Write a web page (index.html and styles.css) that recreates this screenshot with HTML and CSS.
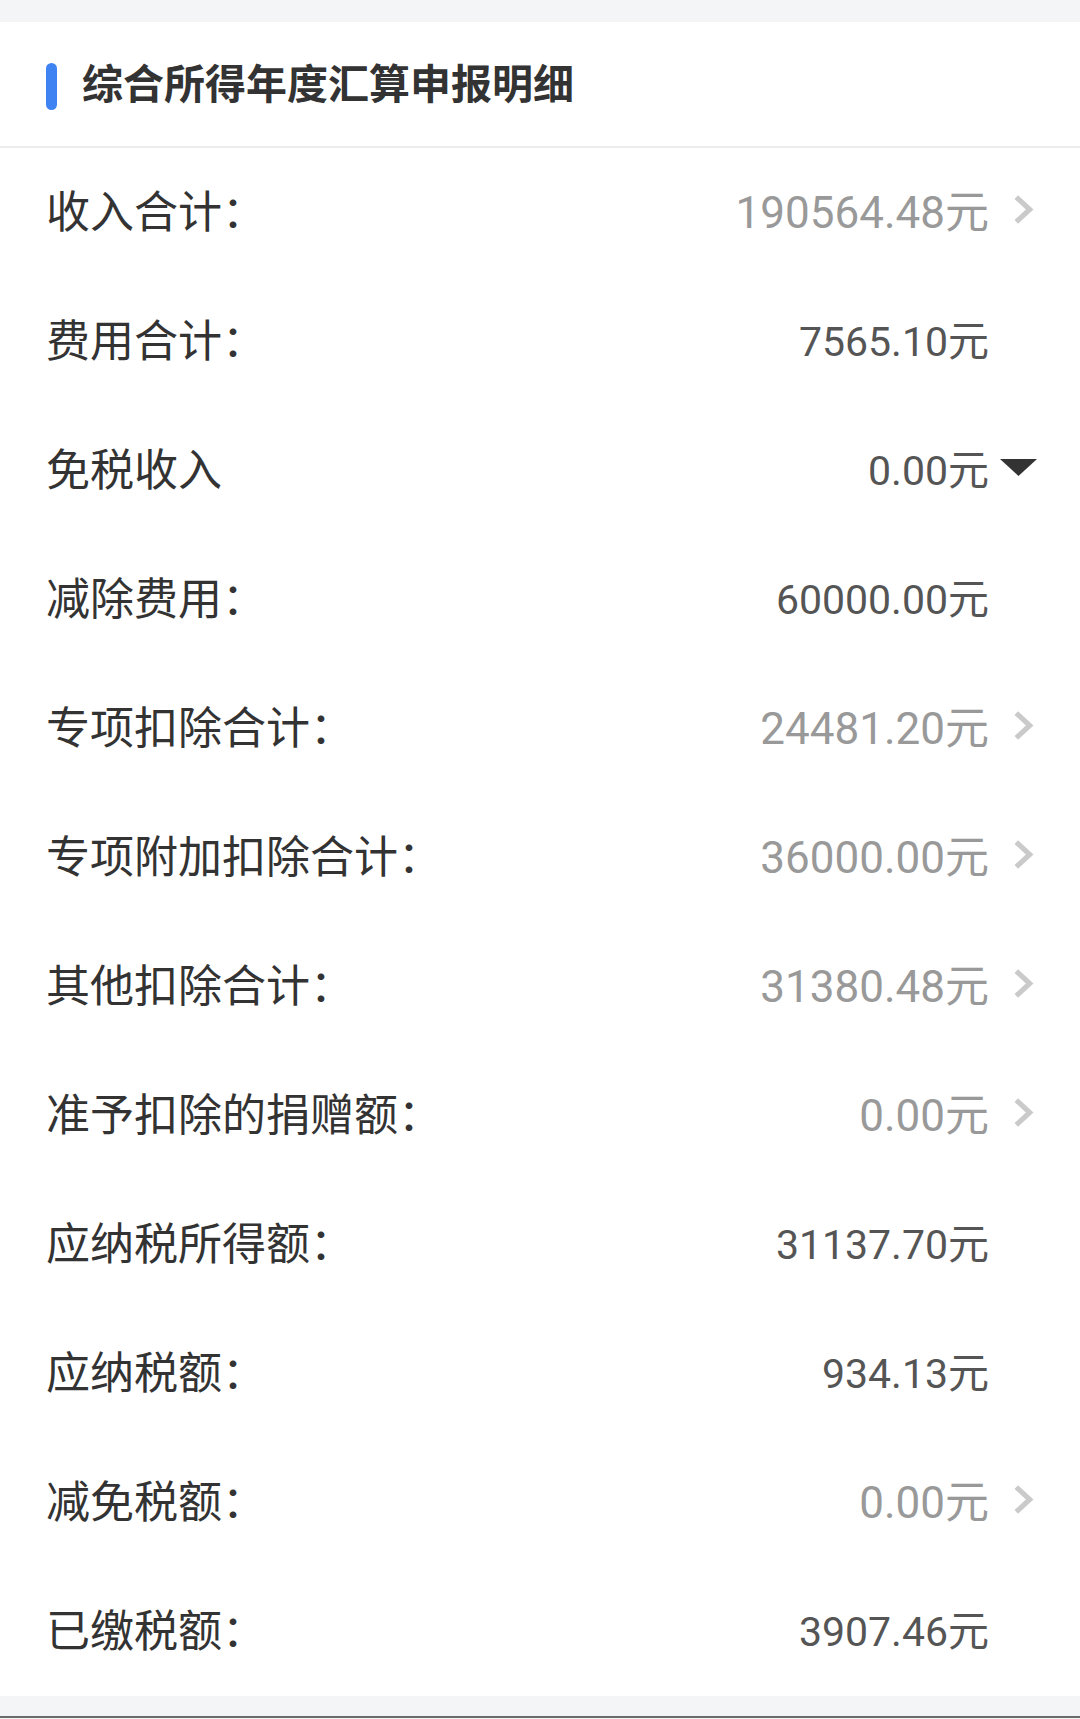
FILE: index.html
```html
<!DOCTYPE html>
<html lang="zh-CN">
<head>
  <meta charset="UTF-8">
  <title>综合所得年度汇算申报明细</title>
  <link rel="stylesheet" href="styles.css">
</head>
<body>
  <div class="card">
    <div class="card-head">
      <span class="mark"></span>
      <h1>综合所得年度汇算申报明细</h1>
    </div>

    <div class="row">
      <span class="label">收入合计：</span>
      <span class="value link">190564.48元</span>
      <span class="icon"><svg class="chev" viewBox="0 0 20 30"><path d="M3 3 L16 15 L3 27"/></svg></span>
    </div>
    <div class="row">
      <span class="label">费用合计：</span>
      <span class="value">7565.10元</span>
      <span class="icon"></span>
    </div>
    <div class="row">
      <span class="label">免税收入</span>
      <span class="value">0.00元</span>
      <span class="icon"><svg class="tri" viewBox="0 0 37 17"><path d="M0 0 H37 L18.5 17 Z"/></svg></span>
    </div>
    <div class="row">
      <span class="label">减除费用：</span>
      <span class="value">60000.00元</span>
      <span class="icon"></span>
    </div>
    <div class="row">
      <span class="label">专项扣除合计：</span>
      <span class="value link">24481.20元</span>
      <span class="icon"><svg class="chev" viewBox="0 0 20 30"><path d="M3 3 L16 15 L3 27"/></svg></span>
    </div>
    <div class="row">
      <span class="label">专项附加扣除合计：</span>
      <span class="value link">36000.00元</span>
      <span class="icon"><svg class="chev" viewBox="0 0 20 30"><path d="M3 3 L16 15 L3 27"/></svg></span>
    </div>
    <div class="row">
      <span class="label">其他扣除合计：</span>
      <span class="value link">31380.48元</span>
      <span class="icon"><svg class="chev" viewBox="0 0 20 30"><path d="M3 3 L16 15 L3 27"/></svg></span>
    </div>
    <div class="row">
      <span class="label">准予扣除的捐赠额：</span>
      <span class="value link">0.00元</span>
      <span class="icon"><svg class="chev" viewBox="0 0 20 30"><path d="M3 3 L16 15 L3 27"/></svg></span>
    </div>
    <div class="row">
      <span class="label">应纳税所得额：</span>
      <span class="value">31137.70元</span>
      <span class="icon"></span>
    </div>
    <div class="row">
      <span class="label">应纳税额：</span>
      <span class="value">934.13元</span>
      <span class="icon"></span>
    </div>
    <div class="row">
      <span class="label">减免税额：</span>
      <span class="value link">0.00元</span>
      <span class="icon"><svg class="chev" viewBox="0 0 20 30"><path d="M3 3 L16 15 L3 27"/></svg></span>
    </div>
    <div class="row">
      <span class="label">已缴税额：</span>
      <span class="value">3907.46元</span>
      <span class="icon"></span>
    </div>
  </div>
</body>
</html>
```

FILE: styles.css
```css
body {
  margin: 0;
  padding: 22px 0 20px;
  background-color: #f4f5f7;
  font-family: Roboto, "Noto Sans CJK SC", sans-serif;
  color: #333;
  border-bottom: 2px solid #6b6b6b;
}

.card {
  background-color: #fff;
}

.card-head {
  display: flex;
  align-items: center;
  height: 124px;
  padding: 0 0 6px 46px;
  box-sizing: border-box;
  border-bottom: 2px solid #ececec;
  height: 126px;
}

.mark {
  width: 11px;
  height: 47px;
  margin-top: 10px;
  border-radius: 6px;
  background-color: #3f83f3;
}

h1 {
  margin: 0 0 0 25px;
  font-size: 41px;
  font-weight: bold;
  color: #333;
}

.row {
  display: flex;
  align-items: center;
  height: 129px;
  padding: 0 43px 7px 46px;
  box-sizing: border-box;
}

.label {
  flex: 1;
  font-size: 44px;
  color: #333;
}

.value {
  font-size: 41px;
  color: #555;
}

.value.link {
  font-size: 44px;
  color: #999;
}

.icon {
  display: flex;
  justify-content: flex-end;
  align-items: center;
  width: 48px;
}

.chev {
  width: 21px;
  height: 31px;
  margin-right: 3px;
  fill: none;
  stroke: #cacaca;
  stroke-width: 5;
}

.tri {
  width: 37px;
  height: 17px;
  fill: #333;
}
```
